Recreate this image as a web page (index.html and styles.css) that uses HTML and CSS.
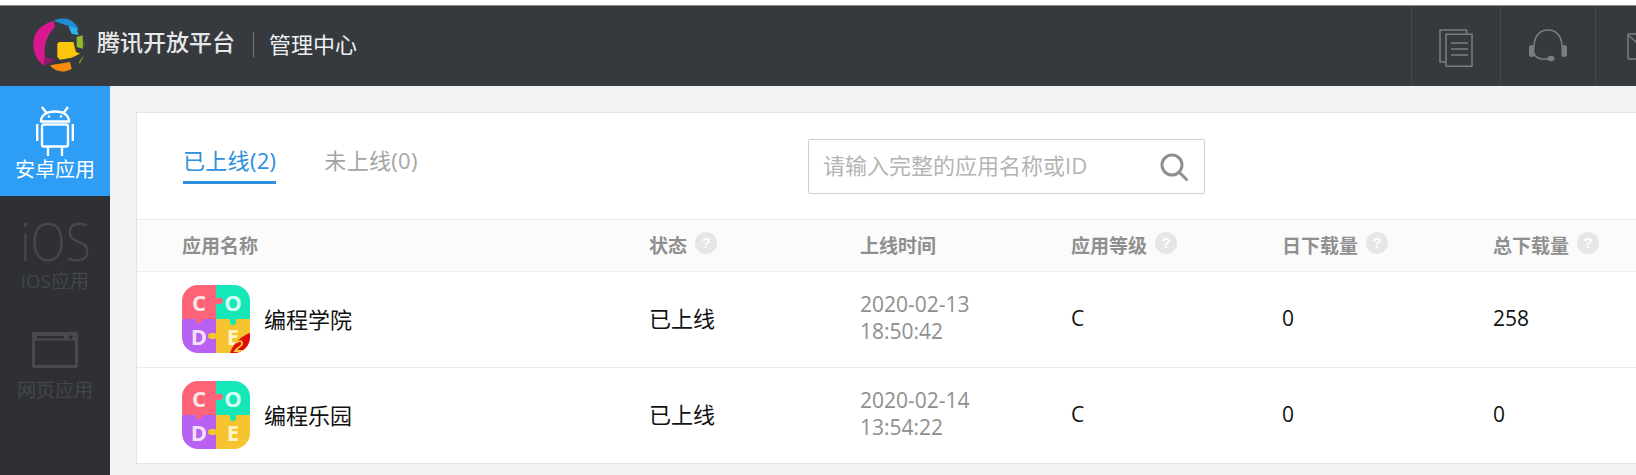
FILE: index.html
```html
<!DOCTYPE html>
<html lang="zh">
<head>
<meta charset="utf-8">
<title>腾讯开放平台 管理中心</title>
<link rel="stylesheet" href="styles.css">
</head>
<body>
<div class="page">
  <header class="topbar">
    <div class="brand">
      <svg class="logo" viewBox="96 50 162 168" width="54" height="56">
        <path d="M160 62C122 72 100 98 100 130c0 28 12 52 32 66l3-26c-6-32 6-68 30-90z" fill="#d9178f"/>
        <path d="M135 170l32 8-33 20z" fill="#8a1a6b"/>
        <path d="M160 62c12-6 24-8 36-7 16 1 30 12 39 30l-9 16c-6-12-14-22-26-26-12-3-20-8-40-13z" fill="#1c8fd6"/>
        <path d="M205 78l24 6 7 21-21-5z" fill="#2fb0ee"/>
        <path d="M230 110l18-5 1 40-19-5z" fill="#8fbb2a"/>
        <path d="M172 130l5-5h43l8 30 12 5-25 12-35 6-8-8z" fill="#fcc70b"/>
        <path d="M150 195l60-10 5 20c-20 13-48 12-65-10z" fill="#f78a0e"/>
        <path d="M236 186l16-22-6 15-7 11z" fill="#8f8a2a"/>
        <path d="M250 112l4 18-2 12z" fill="#6c6a3a"/>
      </svg>
      <span class="brand-name">腾讯开放平台</span>
      <span class="brand-title">管理中心</span>
    </div>
    <nav class="tools">
      <a class="tool tool-docs">
        <svg viewBox="0 0 34 38" width="34" height="38" fill="none" stroke="#7b7e81" stroke-width="1.5">
          <path d="M6.500 33H1V1h26.500v4.500"/>
          <path d="M7 5.300h26v32H7z"/>
          <path d="M12 14h17M12 20h17M12 26h17"/>
        </svg>
      </a>
      <a class="tool tool-help">
        <svg viewBox="0 0 38 34" width="38" height="34" fill="none" stroke="#7b7e81" stroke-width="1.500">
          <path d="M5 18C5 8 10 1 19 1s14 7 14 17"/>
          <path d="M5 24c1 5 5 6 10 6h7"/>
          <rect x="0" y="16" width="5.500" height="12" rx="2.700" fill="#7b7e81" stroke="none"/>
          <rect x="32.500" y="16" width="5.500" height="12" rx="2.700" fill="#7b7e81" stroke="none"/>
          <ellipse cx="22" cy="29.500" rx="3.500" ry="2.800" fill="#7b7e81" stroke="none"/>
        </svg>
      </a>
      <a class="tool tool-mail">
        <svg viewBox="0 0 34 27" width="34" height="27" fill="none" stroke="#7b7e81" stroke-width="1.500">
          <rect x="1" y="1" width="32" height="25" rx="1"/>
          <path d="M1 2l16 14L33 2"/>
        </svg>
      </a>
    </nav>
  </header>

  <div class="body">
    <aside class="sidebar">
      <a class="side-item is-active">
        <svg class="side-icon" viewBox="0 0 38 50" width="38" height="50" fill="none" stroke="#fff" stroke-width="2.400">
          <path d="M6 1l4.500 6M32 1l-4.500 6"/>
          <path d="M5 15.500C5 9 11 5.500 19 5.500S33 9 33 15.500z"/>
          <circle cx="13" cy="10.500" r="1.300" fill="#fff" stroke="none"/>
          <circle cx="25" cy="10.500" r="1.300" fill="#fff" stroke="none"/>
          <rect x="6" y="18.500" width="26" height="22" rx="2"/>
          <path d="M1.200 18v17M36.800 18v17M12 41v9M26 41v9"/>
        </svg>
        <span>安卓应用</span>
      </a>
      <a class="side-item side-ios">
        <span class="ios-mark">iOS</span>
        <span>iOS应用</span>
      </a>
      <a class="side-item side-web">
        <svg class="side-icon" viewBox="0 0 46 36" width="46" height="36">
          <path fill-rule="evenodd" fill="#484a4f" d="M2 0h42a2 2 0 0 1 2 2v32a2 2 0 0 1-2 2H2a2 2 0 0 1-2-2V2a2 2 0 0 1 2-2zM3 8.500V33h40V8.500zM5 4v2.500h27V4zM38.500 3.200a2 2 0 1 0 .01 0z"/>
        </svg>
        <span>网页应用</span>
      </a>
    </aside>

    <main class="content">
      <section class="card">
        <div class="toolbar">
          <div class="tabs">
            <a class="tab is-current">已上线(2)</a>
            <a class="tab">未上线(0)</a>
          </div>
          <div class="search">
            <span class="search-hint">请输入完整的应用名称或ID</span>
            <svg viewBox="0 0 28 28" width="28" height="28" fill="none" stroke="#8f8f8f" stroke-width="3">
              <circle cx="12" cy="12" r="10"/>
              <path d="M19 19l7.500 7.500" stroke-linecap="round"/>
            </svg>
          </div>
        </div>

        <div class="row row-head">
          <div class="cell">应用名称</div>
          <div class="cell">状态<i class="q">?</i></div>
          <div class="cell">上线时间</div>
          <div class="cell">应用等级<i class="q">?</i></div>
          <div class="cell">日下载量<i class="q">?</i></div>
          <div class="cell">总下载量<i class="q">?</i></div>
        </div>

        <div class="row row-app">
          <div class="cell cell-name">
            <span class="app-icon">
              <b class="p p1">C</b><b class="p p2">O</b><b class="p p3">D</b><b class="p p4">E</b>
              <i class="k k-top"></i><i class="k k-left"></i><i class="k k-right"></i><i class="k k-bottom"></i>
              <svg class="ribbon" viewBox="0 0 20 20" width="20" height="20">
                <path d="M0 20C3 11 11 3 20 0v20z" fill="#e40a0a"/>
                <path d="M6 10c3-3 7-2 6 1-1 3-5 4-7 7h8" fill="none" stroke="#f7c63a" stroke-width="1.800"/>
              </svg>
            </span>
            编程学院
          </div>
          <div class="cell">已上线</div>
          <div class="cell cell-time">2020-02-13<br>18:50:42</div>
          <div class="cell">C</div>
          <div class="cell">0</div>
          <div class="cell">258</div>
        </div>

        <div class="row row-app">
          <div class="cell cell-name">
            <span class="app-icon">
              <b class="p p1">C</b><b class="p p2">O</b><b class="p p3">D</b><b class="p p4">E</b>
              <i class="k k-top"></i><i class="k k-left"></i><i class="k k-right"></i><i class="k k-bottom"></i>
            </span>
            编程乐园
          </div>
          <div class="cell">已上线</div>
          <div class="cell cell-time">2020-02-14<br>13:54:22</div>
          <div class="cell">C</div>
          <div class="cell">0</div>
          <div class="cell">0</div>
        </div>
      </section>
    </main>
  </div>
</div>
</body>
</html>
```
FILE: styles.css
```css
* { box-sizing: border-box; }
html, body { margin: 0; height: 100%; overflow: hidden; background: #fff; }
body { font-family: "Open Sans", "Noto Sans CJK SC", "Liberation Sans", sans-serif; }
.page { height: 475px; display: flex; flex-direction: column; padding-top: 5px; }

.topbar {
  height: 81px; flex: none; display: flex; justify-content: space-between;
  background: #363a3e; border-top: 1px solid #8b8d8f;
}
.brand { display: flex; align-items: center; padding-left: 32px; }
.logo { margin-top: -3px; }
.brand-name { margin-left: 11px; color: #e8e8e8; font-size: 23px; font-weight: 500; line-height: 30px; margin-top: -9px; }
.brand-title {
  margin-left: 18px; padding-left: 15px; border-left: 1px solid #74777a;
  color: #eef1f3; font-size: 22px; line-height: 25px; margin-top: -3px;
}
.tools { display: flex; width: 225px; flex: none; }
.tool { flex: none; display: flex; align-items: center; border-left: 1px solid #45494d; }
.tool-docs { width: 89px; padding-left: 27px; padding-top: 3px; }
.tool-help { width: 95px; padding-left: 28px; }
.tool-mail { width: 41px; padding-left: 31px; overflow: hidden; }
.tool svg { flex: none; }

.body { flex: 1; min-height: 0; display: flex; background: #f3f3f3; }
.sidebar { width: 110px; flex: none; background: #2f3035; display: flex; flex-direction: column; }
.side-item {
  display: flex; flex-direction: column; align-items: center; color: #43464c;
  font-size: 19px; line-height: 26px;
}
.side-item.is-active { height: 110px; background: #2d9df5; color: #fff; padding-top: 20px; font-size: 20px; }
.side-icon { display: block; }
.is-active .side-icon { margin-bottom: 1px; }
.side-ios { padding-top: 19px; height: 107px; }
.ios-mark { font-weight: 300; font-size: 54px; line-height: 50px; transform: scaleX(.85); margin-bottom: 3px; color: #46484d; }
.side-web { padding-top: 29px; }
.side-web .side-icon { margin-bottom: 9px; }

.content { flex: 1; min-width: 0; padding: 26px 0 0 26px; }
.card { background: #fff; border: 1px solid #e3e3e3; border-right: 0; height: 352px; }

.toolbar { height: 106px; display: flex; align-items: flex-start; padding-left: 46px; }
.tabs { display: flex; gap: 48px; width: 625px; flex: none; padding-top: 31px; }
.tab { font-size: 22px; line-height: 32px; letter-spacing: .3px; color: #a5a5a5; height: 40px; }
.tab.is-current { color: #2d8fdd; border-bottom: 3px solid #2d8fdd; }
.search {
  width: 397px; height: 55px; margin-top: 26px; flex: none;
  border: 1px solid #cfcfcf; border-radius: 2px;
  display: flex; align-items: center; justify-content: space-between;
  padding: 0 16px 0 14px;
}
.search-hint { font-size: 22px; color: #b4b4b4; line-height: 30px; margin-top: -3px; }

.row { display: grid; grid-template-columns: 467px repeat(4, 211px) 1fr; padding-left: 45px; border-top: 1px solid #ececec; align-items: center; color: #111; }
.row-head { height: 52px; background: #fbfbfb; color: #8f8f8f; font-size: 19px; font-weight: 700; }
.row-head .cell { display: flex; align-items: center; line-height: 26px; }
.row-app { height: 96px; font-size: 21px; padding-bottom: 2px; }
.row-app .cell { line-height: 27px; }
.cell-name { display: flex; align-items: center; gap: 14px; font-size: 22px; margin-bottom: -2px; }
.row-app .cell:nth-child(2) { font-size: 22px; }
.cell-time { color: #8f8f8f; font-size: 21px; padding-bottom: 2px; }

.q {
  width: 22px; height: 22px; margin-left: 8px; margin-top: -6px; border-radius: 50%;
  background: #e6e6e6; color: #fff; font: 700 15px/22px "Liberation Sans", sans-serif; text-align: center;
}

.app-icon {
  position: relative; width: 68px; height: 68px; flex: none; border-radius: 16px; overflow: hidden;
  display: grid; grid-template-columns: 34px 34px; grid-template-rows: 34px 34px;
  margin-top: -2px;
}
.p {
  display: flex; align-items: center; justify-content: center;
  font: 700 22px/1 "Open Sans", sans-serif; color: #fde4e8;
}
.p1 { background: #fd6477; }
.p2 { background: #13e8b6; color: #d8fff5; }
.p3 { background: #b860f0; color: #f2e0fd; }
.p4 { background: #f5c42e; color: #fff3c8; }
.k { position: absolute; border-radius: 4px; }
.k-top { left: 32px; top: 13px; width: 9px; height: 6px; background: #fd6477; }
.k-left { left: 14px; top: 30px; width: 6px; height: 8px; background: #fd6477; }
.k-right { left: 48px; top: 32px; width: 6px; height: 8px; background: #13e8b6; }
.k-bottom { left: 26px; top: 48px; width: 9px; height: 6px; background: #f5c42e; }
.ribbon { position: absolute; right: 0; bottom: 0; }
```
